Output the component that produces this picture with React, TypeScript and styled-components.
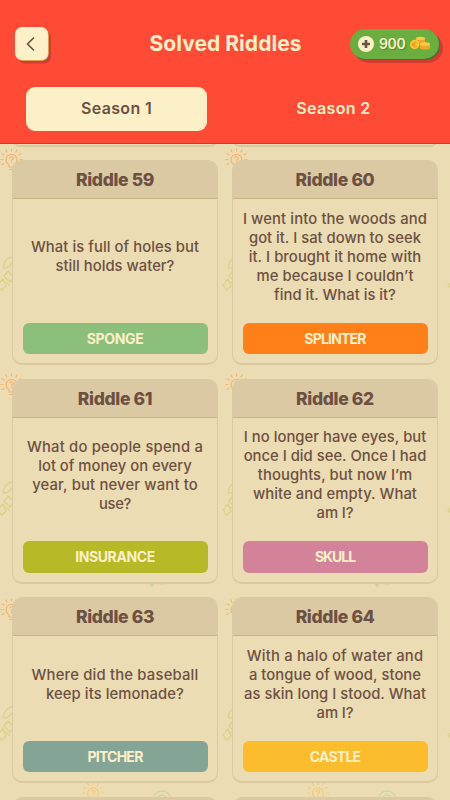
import React from "react";
import styled, { createGlobalStyle } from "styled-components";

const cream = "#fbf0c8";
const sand = "#ebdcb3";
const brown = "#6d5042";

const GlobalStyle = createGlobalStyle`
  * { box-sizing: border-box; }
  body { margin: 0; background: ${sand}; font-family: Inter, "Liberation Sans", sans-serif; }
`;

const Screen = styled.main`
  position: relative;
  width: 450px;
  height: 800px;
  overflow: hidden;
  display: flex;
  flex-direction: column;
  background: ${sand};
  color: ${brown};
`;

const Backdrop = styled.svg`
  position: absolute;
  inset: 0;
  width: 450px;
  height: 800px;
`;

const Header = styled.header`
  position: relative;
  z-index: 1;
  flex: none;
  height: 144px;
  background: #ff4a35;
  border-bottom: 1px solid #f52a12;
`;

const TitleBar = styled.div`
  display: grid;
  grid-template-columns: 90px 1fr 90px;
  align-items: center;
  height: 87px;
  padding: 0 10px 0 15px;
`;

const BackButton = styled.button`
  display: flex;
  align-items: center;
  justify-content: center;
  width: 32.5px;
  height: 32.5px;
  padding: 0 1px 0 0;
  border: 0;
  border-radius: 7px;
  color: ${brown};
  background: ${cream};
  box-shadow: 0.7px 0.7px 0 #e6c35c, 3px 3.5px 0 #cf3c31;
`;

const Title = styled.h1`
  margin: 1px 4px 0 0;
  font-size: 21px;
  font-weight: 650;
  line-height: 26px;
  letter-spacing: 0.05px;
  text-align: center;
  white-space: nowrap;
  color: ${cream};
`;

const Coins = styled.div`
  display: flex;
  align-items: center;
  width: 89px;
  height: 30px;
  padding-left: 8px;
  border-radius: 15px;
  color: ${cream};
  background: #6aae40;
  box-shadow: 1px 1px 0 #2f7d32, 4px 4px 0 #cf3c31;
`;

const CoinCount = styled.span`
  margin: 0 5px 0 5px;
  font-size: 14px;
  font-weight: 600;
  letter-spacing: -0.4px;
  text-shadow: 1px 1px 1px #47852d;
`;

const Tabs = styled.nav`
  display: grid;
  grid-template-columns: 181px 181px;
  justify-content: space-between;
  padding: 0 26px;
`;

const Tab = styled.button<{ $active?: boolean }>`
  height: 44px;
  padding: 0 0 2px;
  border: 0;
  border-radius: 9px;
  font: 600 16px/42px Inter, "Liberation Sans", sans-serif;
  letter-spacing: 0.36px;
  color: ${(p) => (p.$active ? brown : cream)};
  background: ${(p) => (p.$active ? cream : "transparent")};
`;

const List = styled.section`
  position: relative;
  flex: none;
  display: grid;
  grid-template-columns: 206px 206px;
  grid-template-rows: 16px 205px 205px 186px 60px;
  gap: 13.5px 14px;
  margin-top: -13.5px;
  padding: 0 12px;
`;

const Card = styled.article`
  display: flex;
  flex-direction: column;
  border: 1px solid #dac9a1;
  border-bottom: 2px solid #d9c8a0;
  border-radius: 10px;
  background: ${sand};
  overflow: hidden;
`;

const CardTitle = styled.h2`
  flex: none;
  height: 38px;
  margin: 0;
  border-bottom: 1px solid #c8b286;
  font-size: 17.5px;
  font-weight: 800;
  line-height: 38px;
  letter-spacing: -0.34px;
  text-align: center;
  background: #dac9a2;
`;

const Question = styled.p`
  flex: 1;
  display: flex;
  flex-direction: column;
  align-items: center;
  justify-content: center;
  margin: 0;
  padding-top: 1px;
`;

const Line = styled.span<{ $tracking: number }>`
  font-size: 14.8px;
  font-weight: 530;
  line-height: 19.1px;
  white-space: nowrap;
  letter-spacing: ${(p) => p.$tracking}px;
`;

const Answer = styled.div<{ $fill: string; $tracking: number }>`
  flex: none;
  height: 31.5px;
  margin: 8px 9.5px 9px;
  border-radius: 6px;
  font-size: 14px;
  font-weight: 650;
  line-height: 32px;
  letter-spacing: ${(p) => p.$tracking}px;
  text-align: center;
  color: ${cream};
  background: ${(p) => p.$fill};
`;

type Riddle = {
  id: number;
  lines: [string, number][];
  answer: string;
  tracking: number;
  fill: string;
};

const riddles: Riddle[] = [
  {
    id: 59,
    lines: [["What is full of holes but", 0.07], ["still holds water?", 0.02]],
    answer: "SPONGE", tracking: -0.35, fill: "#8cbf7c",
  },
  {
    id: 60,
    lines: [
      ["I went into the woods and", 0.13],
      ["got it. I sat down to seek", 0.01],
      ["it. I brought it home with", 0.07],
      ["me because I couldn’t", 0.08],
      ["find it. What is it?", 0],
    ],
    answer: "SPLINTER", tracking: -0.8, fill: "#ff8019",
  },
  {
    id: 61,
    lines: [
      ["What do people spend a", 0.2],
      ["lot of money on every", 0],
      ["year, but never want to", 0.17],
      ["use?", -0.3],
    ],
    answer: "INSURANCE", tracking: -0.4, fill: "#b7ba26",
  },
  {
    id: 62,
    lines: [
      ["I no longer have eyes, but", 0.05],
      ["once I did see. Once I had", 0.01],
      ["thoughts, but now I’m", 0.07],
      ["white and empty. What", 0.07],
      ["am I?", -0.1],
    ],
    answer: "SKULL", tracking: -1.05, fill: "#d28399",
  },
  {
    id: 63,
    lines: [["Where did the baseball", 0.2], ["keep its lemonade?", 0.09]],
    answer: "PITCHER", tracking: -0.75, fill: "#84a596",
  },
  {
    id: 64,
    lines: [
      ["With a halo of water and", 0.21],
      ["a tongue of wood, stone", 0.05],
      ["as skin long I stood. What", 0.03],
      ["am I?", -0.1],
    ],
    answer: "CASTLE", tracking: -0.75, fill: "#fbbd2e",
  },
];

function Bulb({ x, y, color }: { x: number; y: number; color: string }) {
  return (
    <g transform={`translate(${x} ${y})`} stroke={color} fill="none" strokeWidth="1.2" strokeLinecap="round">
      <path d="M-2.5 7.5V5.2C-7 2.5-6-5 0-5S7 2.5 2.5 5.2V7.5ZM-2 10H2" />
      <path d="M-1.6-1.5C-1.5-3.3 2-3.2 1.7-1.2C1.5 0 0 0 0 1.2M0 3V3.1" />
      <path d="M0-8.5V-10.5M-4.5-7.5L-5.5-9.5M4.5-7.5L5.5-9.5M-7.5-4.5L-9.5-5.7M7.5-4.5L9.5-5.7M-8.5 0H-10.5M8.5 0H10.5M-7.7 4L-9.5 5M7.7 4L9.5 5" />
    </g>
  );
}

function Doodles() {
  return (
    <Backdrop viewBox="0 0 450 800" aria-hidden="true">
      <defs>
        <pattern id="doodles" width="225" height="225" y="144" patternUnits="userSpaceOnUse">
          <Bulb x={11.5} y={15.5} color="#f8b26c" />
          <Bulb x={93} y={199} color="#f3cb75" />
          <g fill="none" stroke="#d9d383" strokeWidth="1.3" strokeLinejoin="round">
            <path d="M15 113C8 112 3 118 3.5 124C8 125 13 119 15 113Z" />
            <path d="M4 132L8 127L14 133L10 138ZM-1 139L3 135L6 142L2 146Q-1 145-1 139ZM6 138L10 142" />
            <path d="M231 134L223 141L229 147" />
          </g>
          <g fill="none" stroke="#ced5a0" strokeWidth="1.3">
            <circle cx="162" cy="206" r="9" />
            <circle cx="162" cy="206" r="5" />
          </g>
          <path d="M149.5 214.500L154.500 214.500L152 218.500Z" fill="#c5d3a0" />
        </pattern>
      </defs>
      <rect y="144" width="450" height="656" fill="url(#doodles)" />
    </Backdrop>
  );
}

function PlusIcon() {
  return (
    <svg width="16" height="16" viewBox="0 0 16 16">
      <circle cx="8" cy="8" r="8" fill={cream} />
      <path d="M8 4V12M4 8H12" stroke={brown} strokeWidth="2.6" />
    </svg>
  );
}

function CoinsIcon() {
  return (
    <svg width="20" height="15" viewBox="0 0 20 15">
      <path d="M6 2.5V7Q10.5 8 15 7V2.5Z" fill="#eaa92d" />
      <path d="M10 8V12Q10.5 13.5 15 13.5T20 12V8Z" fill="#eaa92d" />
      <ellipse cx="10.5" cy="2.5" rx="4.6" ry="1.7" fill="#fcc945" />
      <ellipse cx="15" cy="8" rx="5" ry="1.8" fill="#fcc945" />
      <circle cx="4.7" cy="8.5" r="4.7" fill="#fcc431" />
      <path d="M6.8 6.6C4.7 5 3 7 3 8.5S4.5 12 6.8 10.4M2 7.9H5.3M2 9.2H5.3" fill="none" stroke="#d68b19" strokeWidth=".8" />
    </svg>
  );
}

export default function App() {
  return (
    <>
      <GlobalStyle />
      <Screen>
        <Doodles />
        <Header>
          <TitleBar>
            <BackButton aria-label="Back">
              <svg width="9" height="14" viewBox="0 0 9 14">
                <path d="M7.5 1L1.5 7L7.5 13" fill="none" stroke="currentColor" strokeWidth="1.7" strokeLinecap="round" strokeLinejoin="round" />
              </svg>
            </BackButton>
            <Title>Solved Riddles</Title>
            <Coins>
              <PlusIcon />
              <CoinCount>900</CoinCount>
              <CoinsIcon />
            </Coins>
          </TitleBar>
          <Tabs>
            <Tab $active>Season 1</Tab>
            <Tab>Season 2</Tab>
          </Tabs>
        </Header>
        <List>
          <Card />
          <Card />
          {riddles.map((r) => (
            <Card key={r.id}>
              <CardTitle>Riddle {r.id}</CardTitle>
              <Question>
                {r.lines.map(([text, tracking]) => (
                  <Line key={text} $tracking={tracking}>{text}</Line>
                ))}
              </Question>
              <Answer $fill={r.fill} $tracking={r.tracking}>{r.answer}</Answer>
            </Card>
          ))}
          <Card><CardTitle /></Card>
          <Card><CardTitle /></Card>
        </List>
      </Screen>
    </>
  );
}
